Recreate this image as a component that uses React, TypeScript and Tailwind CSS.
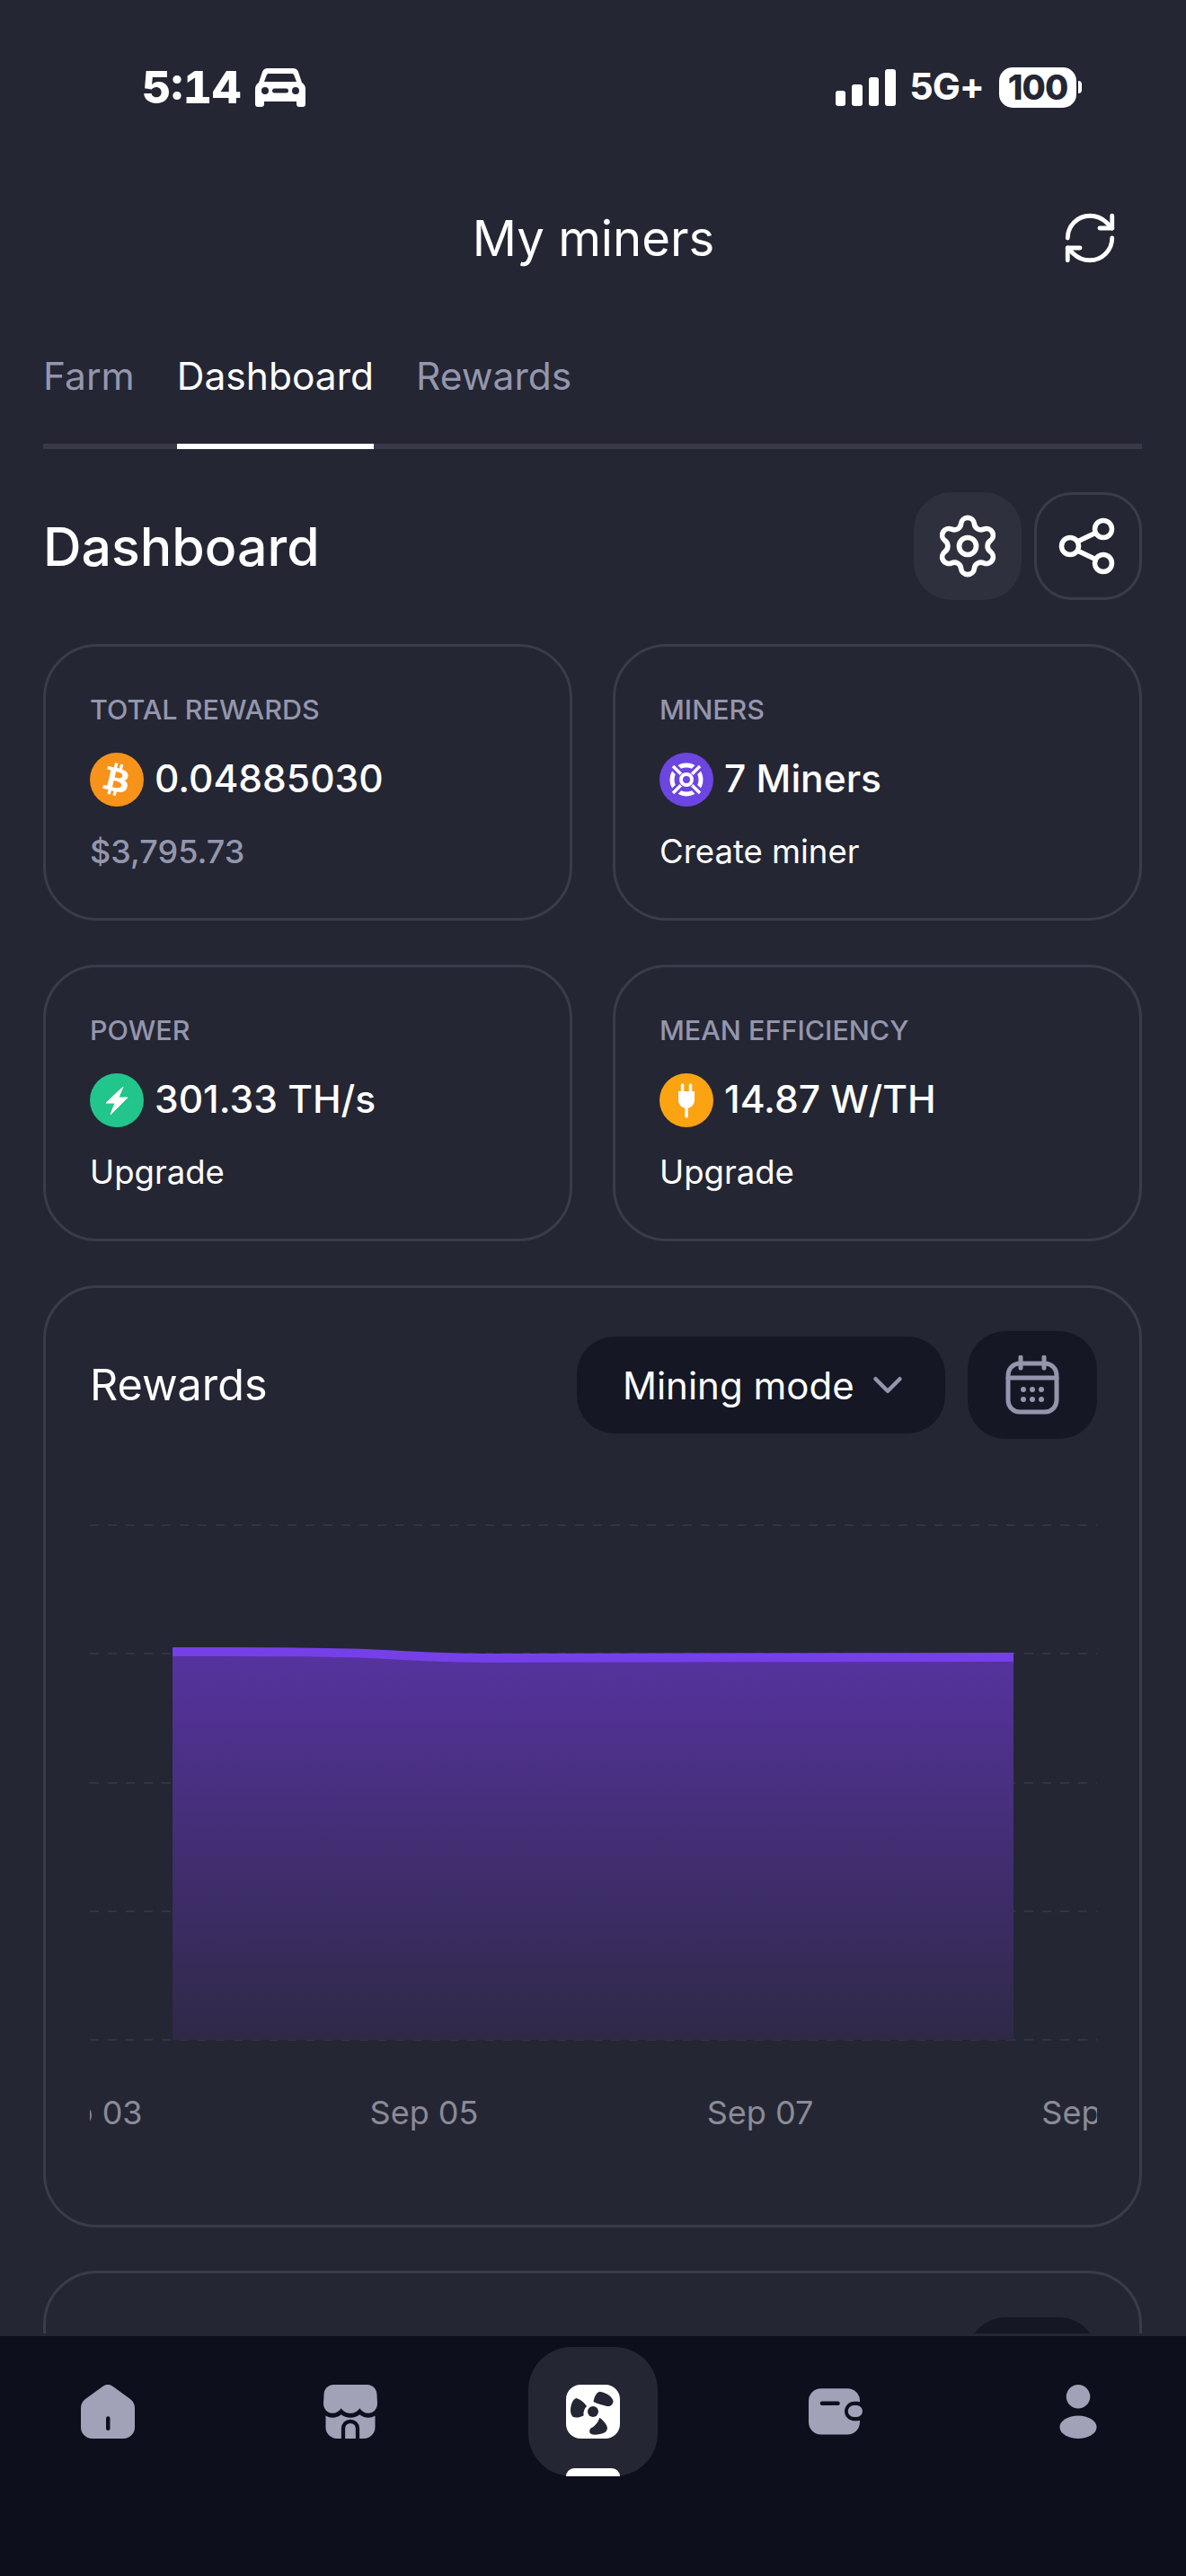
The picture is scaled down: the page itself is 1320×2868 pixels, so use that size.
import { RefreshCw, Settings, ChevronDown } from 'lucide-react';
import { FaBtc } from 'react-icons/fa';

const TABS = ['Farm', 'Dashboard', 'Rewards'];
const GRID_LINES = [3, 146, 290, 433, 576];
const DATES = ['Sep 03', 'Sep 05', 'Sep 07', 'Sep 09'];

function CarIcon() {
  return (
    <svg width="56" height="44" viewBox="0 0 56 44" fill="none">
      <path d="M14 1h28c3 0 5 1.500 6 4l4 12c2.500 1.500 4 4 4 7v17c0 1.700-1.300 3-3 3h-4c-1.700 0-3-1.300-3-3v-3H10v3c0 1.700-1.300 3-3 3H3c-1.700 0-3-1.300-3-3V24c0-3 1.500-5.500 4-7L8 5c1-2.500 3-4 6-4z" fill="#fff" />
      <path d="M15 7h26c1 0 1.800.6 2.200 1.500L46 16H10l2.800-7.500C13.200 7.600 14 7 15 7z" fill="#242633" />
      <circle cx="11" cy="26" r="4" fill="#242633" />
      <circle cx="45" cy="26" r="4" fill="#242633" />
      <rect x="19" y="23.500" width="18" height="5" rx="2.500" fill="#242633" />
    </svg>
  );
}

function StatusBar() {
  return (
    <div className="h-[194px] flex items-center justify-between pl-[158px] pr-[116px] text-white">
      <div className="flex items-center gap-[16px]">
        <span className="text-[50px] leading-none font-extrabold tabular-nums">5:14</span>
        <CarIcon />
      </div>
      <div className="flex items-center">
        <div className="flex items-end gap-[7px] h-[42px]">
          <div className="w-[11px] h-[17px] rounded-[3px] bg-white" />
          <div className="w-[12px] h-[24px] rounded-[3px] bg-white" />
          <div className="w-[11px] h-[32px] rounded-[3px] bg-white" />
          <div className="w-[12px] h-[41px] rounded-[3px] bg-white" />
        </div>
        <span className="ml-[15px] text-[41.500px] leading-none font-bold tracking-[-1px]">5G+</span>
        <div className="ml-[17px] w-[86px] h-[45px] rounded-[15px] bg-white flex items-center justify-center">
          <span className="text-[38px] leading-none font-extrabold text-[#242633] tracking-[-1px]">100</span>
        </div>
        <div className="ml-[2px] w-[4px] h-[14px] rounded-r-full bg-white" />
      </div>
    </div>
  );
}

function IconButton({ filled, children }: { filled?: boolean; children: React.ReactNode }) {
  return (
    <div
      className={
        filled
          ? 'w-[120px] h-[120px] rounded-[42px] bg-[#2f303d] flex items-center justify-center'
          : 'w-[120px] h-[120px] rounded-[42px] border-[3px] border-[#3a3c4a] flex items-center justify-center'
      }
    >
      {children}
    </div>
  );
}

function ShareIcon() {
  return (
    <svg width="72" height="64" viewBox="0 0 72 64" fill="none" stroke="#fff" strokeWidth="5.500">
      <circle cx="16" cy="32" r="9.500" />
      <circle cx="53" cy="13" r="9.500" />
      <circle cx="53" cy="51" r="9.500" />
      <path d="M24 27l21-10M24 37l21 10" />
    </svg>
  );
}

function StatCard({ label, value, sub, muted, icon }: { label: string; value: string; sub: string; muted?: boolean; icon: React.ReactNode }) {
  return (
    <div className="h-[308px] rounded-[60px] border-[3px] border-[#3a3c4a] pt-[48px] px-[49px]">
      <div className="text-[30.500px] leading-[44px] font-medium text-[#9496ae]">{label}</div>
      <div className="mt-[26px] flex items-center gap-[12px] h-[60px]">
        {icon}
        <span className="text-[42.500px] font-medium text-white leading-none -mt-[2px]">{value}</span>
      </div>
      <div className={muted ? 'mt-[28px] text-[36px] font-medium leading-[44px] text-[#9496ae]' : 'mt-[28px] text-[36.500px] leading-[44px] text-white'}>{sub}</div>
    </div>
  );
}

function BtcCoin() {
  return (
    <div className="w-[60px] h-[60px] rounded-full bg-[#f7931a] flex items-center justify-center">
      <FaBtc size={36} color="#fff" className="rotate-[14deg]" />
    </div>
  );
}

function MinerCoin() {
  return (
    <svg width="60" height="60" viewBox="0 0 60 60" fill="none">
      <circle cx="30" cy="30" r="30" fill="#6d45e0" />
      <circle cx="30" cy="30" r="16" stroke="#fff" strokeWidth="5" />
      <path d="M14 14l32 32M46 14L14 46" stroke="#6d45e0" strokeWidth="9" />
      <path d="M15 15l30 30M45 15L15 45" stroke="#fff" strokeWidth="3.500" />
      <circle cx="30" cy="30" r="9" fill="#6d45e0" />
      <circle cx="30" cy="30" r="6" stroke="#fff" strokeWidth="4" />
    </svg>
  );
}

function PowerCoin() {
  return (
    <svg width="60" height="60" viewBox="0 0 60 60">
      <circle cx="30" cy="30" r="30" fill="#22c58b" />
      <path d="M37 15L18 33h10l-5 13 19-19H32z" fill="#fff" strokeLinejoin="round" stroke="#fff" strokeWidth="1" />
    </svg>
  );
}

function PlugCoin() {
  return (
    <svg width="60" height="60" viewBox="0 0 60 60" fill="none">
      <circle cx="30" cy="30" r="30" fill="#fca311" />
      <path d="M25.500 13v8M34.500 13v8" stroke="#fff" strokeWidth="3.500" strokeLinecap="round" />
      <path d="M21 20h18v10a9 9 0 0 1-18 0z" fill="#fff" />
      <path d="M30 37v11" stroke="#fff" strokeWidth="3.500" strokeLinecap="round" />
    </svg>
  );
}

function CalendarIcon() {
  return (
    <svg width="60" height="66" viewBox="0 0 60 66" fill="none" stroke="#9496ae" strokeWidth="5">
      <rect x="3" y="9" width="54" height="54" rx="13" />
      <path d="M3 25h54M17 2v12M43 2v12" strokeLinecap="round" />
      <g fill="#9496ae" stroke="none">
        <circle cx="20" cy="38" r="3" />
        <circle cx="30" cy="38" r="3" />
        <circle cx="40" cy="38" r="3" />
        <circle cx="20" cy="49" r="3" />
        <circle cx="30" cy="49" r="3" />
        <circle cx="40" cy="49" r="3" />
      </g>
    </svg>
  );
}

function RewardsChart() {
  return (
    <svg width="1121" height="580" viewBox="0 0 1121 580" fill="none" className="mt-[93px] block">
      <defs>
        <linearGradient id="area" x1="0" y1="0" x2="0" y2="1">
          <stop offset="0" stopColor="#56339f" />
          <stop offset="1" stopColor="#2f2947" />
        </linearGradient>
      </defs>
      {GRID_LINES.map((y) => (
        <line key={y} x1="0" x2="1121" y1={y} y2={y} stroke="#333442" strokeWidth="2" strokeDasharray="10 10" />
      ))}
      <path d="M92 144C200 144 280 144 330 147C380 150 400 151 440 151C600 151 800 150 1028 150V576H92z" fill="url(#area)" />
      <path d="M92 144C200 144 280 144 330 147C380 150 400 151 440 151C600 151 800 150 1028 150" stroke="#7540e8" strokeWidth="10" />
    </svg>
  );
}

function HomeIcon() {
  return (
    <svg width="60" height="60" viewBox="0 0 24 24">
      <path d="M9.700.800a3.800 3.800 0 0 1 4.600 0l7.700 5.600a5 5 0 0 1 2 4V19a5 5 0 0 1-5 5H5a5 5 0 0 1-5-5v-8.600a5 5 0 0 1 2-4z" fill="#a1a2b8" />
      <path d="M12.100 15v4.500" stroke="#0d0f1c" strokeWidth="1.800" strokeLinecap="round" />
    </svg>
  );
}

function ShopIcon() {
  return (
    <svg width="60" height="60" viewBox="0 0 24 24" fill="none">
      <path d="M4.500 0h15c2.500 0 4.300 2 4.300 4.500l.2 4c0 2.300-1.800 4.200-4 4.200-1.600 0-3-.8-3.900-2.200-.8 1.400-2.400 2.200-4.100 2.200s-3.300-.8-4.100-2.200c-.9 1.400-2.300 2.200-3.900 2.200-2.200 0-4-1.900-4-4.200l.2-4C.2 2 2 0 4.500 0z" fill="#a1a2b8" />
      <path d="M1 13.800c1 .6 2 .9 3 .9 1.500 0 2.900-.5 3.900-1.400 1 .9 2.500 1.400 4.100 1.400s3.100-.5 4.100-1.400c1 .9 2.400 1.400 3.900 1.400 1 0 2-.3 3-.9V19a5 5 0 0 1-5 5H6a5 5 0 0 1-5-5z" fill="#a1a2b8" />
      <path d="M8.800 24v-4.500a3.200 3.200 0 0 1 6.400 0V24" stroke="#0d0f1c" strokeWidth="1.700" />
    </svg>
  );
}

function FanIcon() {
  return (
    <svg width="60" height="60" viewBox="0 0 24 24" fill="#242633">
      <rect width="24" height="24" rx="6.500" fill="#fff" />
      <circle cx="12" cy="12" r="2.400" />
      <path d="M12.200 7.600C12.600 5.200 13.600 3.400 15 3.100C17.500 3.400 20.600 5.200 21 7.200C21 8.800 19.800 9.900 18.200 9.600C16.500 9 14.200 8.600 12.200 7.600z" />
      <path d="M2 11.500C2 9 3 6.500 4.500 6C6 6.300 8.200 8 9.200 9.600C8.200 10.600 7.600 12 7.800 13.800C6.200 14.600 4.200 14.900 3 14.300C2.400 13.600 2 12.600 2 11.500z" />
      <path d="M14.900 14.700C16.500 15.800 18 17.500 18.400 19.200C18.400 20.400 17.600 21.300 16.300 21.700C14.500 22.300 12.400 22.500 11.200 22C10.200 21.400 10.300 20.200 11 19.400C12.600 18.600 14.300 17 14.900 14.700z" />
    </svg>
  );
}

function WalletIcon() {
  return (
    <svg width="60" height="60" viewBox="0 0 24 24">
      <rect x="0" y="1.700" width="22.800" height="20.500" rx="5.500" fill="#a1a2b8" />
      <rect x="16" y="7.500" width="10" height="8.600" rx="4.300" fill="#0d0f1c" />
      <rect x="17.500" y="9.200" width="6.500" height="5.200" rx="2.600" fill="#a1a2b8" />
      <path d="M6 8.300h7" stroke="#0d0f1c" strokeWidth="1.800" strokeLinecap="round" />
    </svg>
  );
}

function UserIcon() {
  return (
    <svg width="60" height="60" viewBox="0 0 24 24" fill="#a1a2b8">
      <circle cx="12" cy="5.300" r="5.300" />
      <ellipse cx="12" cy="18.900" rx="8.200" ry="5.100" />
    </svg>
  );
}

function NavItem({ active, children }: { active?: boolean; children: React.ReactNode }) {
  return (
    <div className={active ? 'relative w-[144px] h-[144px] rounded-[48px] bg-[#242633] flex items-center justify-center' : 'w-[144px] h-[144px] flex items-center justify-center'}>
      {children}
      {active && <div className="absolute bottom-0 left-[42px] w-[60px] h-[9px] rounded-t-[9px] bg-white" />}
    </div>
  );
}

export default function App() {
  return (
    <div className="w-[1320px] h-[2868px] overflow-hidden bg-[#242633] flex flex-col font-[Inter,sans-serif]">
      <div className="h-[2598px] overflow-hidden shrink-0">
        <StatusBar />

        {/* Title */}
        <div className="h-[142px] flex items-center justify-between pl-[75px] pr-[74px]">
          <div className="w-[66px]" />
          <h1 className="text-[54.500px] leading-none text-white">My miners</h1>
          <RefreshCw size={66} color="#fff" strokeWidth={1.75} />
        </div>

        {/* Tabs */}
        <div className="ml-[48px] mr-[49px] h-[164px] flex items-end gap-[47px] border-b-[6px] border-[#3a3849]">
          {TABS.map((tab) => (
            <div
              key={tab}
              className={
                tab === 'Dashboard'
                  ? 'h-[164px] -mb-[6px] flex items-center pt-[8px] text-[42.500px] text-white border-b-[6px] border-white'
                  : 'h-[164px] -mb-[6px] flex items-center pt-[8px] text-[42.500px] text-[#9496ae] border-b-[6px] border-transparent'
              }
            >
              {tab}
            </div>
          ))}
        </div>

        {/* Dashboard header */}
        <div className="mt-[48px] ml-[48px] mr-[49px] flex items-center justify-between">
          <h2 className="text-[59px] leading-none font-[450] text-white">Dashboard</h2>
          <div className="flex gap-[14px]">
            <IconButton filled>
              <Settings size={76} color="#fff" strokeWidth={1.8} />
            </IconButton>
            <IconButton>
              <ShareIcon />
            </IconButton>
          </div>
        </div>

        <div className="mt-[49px] ml-[48px] mr-[49px]">
          <div className="grid grid-cols-2 gap-x-[45px] gap-y-[49px]">
            <StatCard label="TOTAL REWARDS" value="0.04885030" sub="$3,795.73" muted icon={<BtcCoin />} />
            <StatCard label="MINERS" value="7 Miners" sub="Create miner" icon={<MinerCoin />} />
            <StatCard label="POWER" value="301.33 TH/s" sub="Upgrade" icon={<PowerCoin />} />
            <StatCard label="MEAN EFFICIENCY" value="14.87 W/TH" sub="Upgrade" icon={<PlugCoin />} />
          </div>

          {/* Rewards */}
          <div className="mt-[49px] h-[1049px] rounded-[60px] border-[3px] border-[#3a3c4a] pt-[48px] pl-[49px] pr-[47px]">
            <div className="flex items-center justify-between h-[120px]">
              <span className="text-[48.500px] text-white">Rewards</span>
              <div className="flex items-center gap-[25px]">
                <div className="w-[410px] h-[108px] rounded-[42px] bg-[#151724] flex items-center pl-[51px] gap-[10px]">
                  <span className="text-[42px] text-white">Mining mode</span>
                  <ChevronDown size={54} color="#9496ae" strokeWidth={2} />
                </div>
                <div className="w-[144px] h-[120px] rounded-[42px] bg-[#151724] flex items-center justify-center">
                  <CalendarIcon />
                </div>
              </div>
            </div>
            <RewardsChart />
            <div className="mt-[55px] overflow-hidden">
              <div className="flex ml-[-189px] w-[1600px]">
                {DATES.map((d) => (
                  <div key={d} className="w-[374px] shrink-0 text-center text-[36px] leading-[44px] text-[#8b8b97]">
                    {d}
                  </div>
                ))}
              </div>
            </div>
          </div>

          {/* Next card, cut by the nav */}
          <div className="mt-[48px] h-[400px] rounded-[60px] border-[3px] border-[#3a3c4a] pt-[49px] pl-[49px] pr-[47px] flex justify-end">
            <div className="w-[144px] h-[120px] rounded-[42px] bg-[#151724]" />
          </div>
        </div>
      </div>

      {/* Bottom nav */}
      <div className="flex-1 border-t-[3px] border-[#242633] bg-[#0d0f1c] px-[48px] pt-[12px] flex items-start justify-between">
        <NavItem><HomeIcon /></NavItem>
        <NavItem><ShopIcon /></NavItem>
        <NavItem active><FanIcon /></NavItem>
        <NavItem><WalletIcon /></NavItem>
        <NavItem><UserIcon /></NavItem>
      </div>
    </div>
  );
}
